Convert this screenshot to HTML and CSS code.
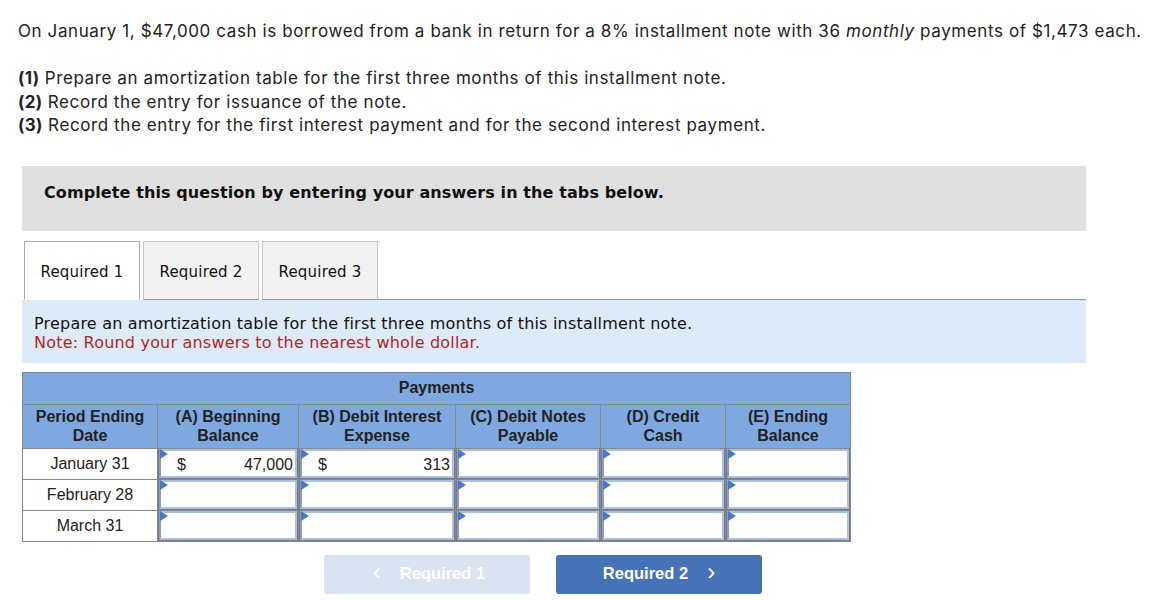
FILE: index.html
```html
<!DOCTYPE html>
<html>
<head>
<meta charset="utf-8">
<link rel="stylesheet" href="styles.css">
</head>
<body>
<div class="page">
  <p class="intro">On January 1, $47,000 cash is borrowed from a bank in return for a 8% installment note with 36 <em>monthly</em> payments of $1,473 each.</p>
  <div class="reqs">
    <div><b>(1)</b> Prepare an amortization table for the first three months of this installment note.</div>
    <div><b>(2)</b> Record the entry for issuance of the note.</div>
    <div><b>(3)</b> Record the entry for the first interest payment and for the second interest payment.</div>
  </div>
  <div class="panel">
    <div class="banner">Complete this question by entering your answers in the tabs below.</div>
    <div class="tabs">
      <div class="tab active">Required 1</div>
      <div class="tab">Required 2</div>
      <div class="tab">Required 3</div>
      <div class="tab-fill"></div>
    </div>
    <div class="instr">
      <div>Prepare an amortization table for the first three months of this installment note.</div>
      <div class="note">Note: Round your answers to the nearest whole dollar.</div>
    </div>
    <table class="amort">
      <colgroup>
        <col class="c0"><col class="c1"><col class="c2"><col class="c3"><col class="c4"><col class="c5">
      </colgroup>
      <thead>
        <tr class="h1"><th colspan="6">Payments</th></tr>
        <tr class="h2">
          <th>Period Ending<br>Date</th>
          <th>(A) Beginning<br>Balance</th>
          <th>(B) Debit Interest<br>Expense</th>
          <th>(C) Debit Notes<br>Payable</th>
          <th>(D) Credit<br>Cash</th>
          <th>(E) Ending<br>Balance</th>
        </tr>
      </thead>
      <tbody>
        <tr>
          <td class="date">January 31</td>
          <td class="in"><div class="box"><span class="cur">$</span><span class="val">47,000</span></div></td>
          <td class="in"><div class="box"><span class="cur">$</span><span class="val">313</span></div></td>
          <td class="in"><div class="box"></div></td>
          <td class="in"><div class="box"></div></td>
          <td class="in"><div class="box"></div></td>
        </tr>
        <tr>
          <td class="date">February 28</td>
          <td class="in"><div class="box"></div></td>
          <td class="in"><div class="box"></div></td>
          <td class="in"><div class="box"></div></td>
          <td class="in"><div class="box"></div></td>
          <td class="in"><div class="box"></div></td>
        </tr>
        <tr>
          <td class="date">March 31</td>
          <td class="in"><div class="box"></div></td>
          <td class="in"><div class="box"></div></td>
          <td class="in"><div class="box"></div></td>
          <td class="in"><div class="box"></div></td>
          <td class="in"><div class="box"></div></td>
        </tr>
      </tbody>
    </table>
    <div class="nav">
      <div class="btn prev"><span class="chev">&lsaquo;</span>Required 1</div>
      <div class="btn next">Required 2<span class="chev">&rsaquo;</span></div>
    </div>
  </div>
</div>
</body>
</html>
```

FILE: styles.css
```css
* { box-sizing: border-box; }
body { margin: 0; background: #fff; color: #222; }
.page { padding: 19px 0 0 18px; }
.intro {
  margin: 0;
  font-family: Inter, "Open Sans", sans-serif;
  font-size: 17px;
  line-height: 24px;
  letter-spacing: 0.6px;
}
.intro em { font-style: italic; }
.reqs {
  margin-top: 24px;
  font-family: Inter, "Open Sans", sans-serif;
  font-size: 17px;
  line-height: 23.5px;
  letter-spacing: 0.6px;
}
.reqs b { font-weight: 700; letter-spacing: 0.3px; }
.panel { margin-left: 4px; width: 1064px; margin-top: 28px; }
.banner {
  background: #e0e0e0;
  height: 65px;
  padding: 17px 0 0 22px;
  font-family: "DejaVu Sans", Verdana, sans-serif;
  font-weight: bold;
  font-size: 16px;
  letter-spacing: 0.1px;
  color: #111;
}
.tabs { display: flex; margin-top: 10px; height: 59px; align-items: stretch; }
.tab {
  width: 116px;
  margin-right: 3px;
  border: 1px solid #c8c8c8;
  border-bottom: 1px solid #999;
  background: #f2f2f2;
  font-family: "DejaVu Sans", Verdana, sans-serif;
  font-size: 15px;
  letter-spacing: 0.2px;
  color: #111;
  display: flex; align-items: center; justify-content: center;
  padding-top: 4px;
}
.tab.active {
  margin-left: 2px;
  background: #fff;
  border-color: #aaa;
  border-bottom: 1px solid #fff;
}
.tab-fill { flex: 1; border-bottom: 1px solid #999; margin-left: -3px; }
.instr {
  background: #ddeaf8;
  height: 63px;
  padding: 14px 0 0 12px;
  font-family: "DejaVu Sans", Verdana, sans-serif;
  font-size: 16px;
  letter-spacing: 0.2px;
  line-height: 19px;
  color: #111;
}
.instr .note { color: #b3261e; }
.amort {
  margin-top: 9px;
  border-collapse: collapse;
  font-family: "Liberation Sans", Arial, sans-serif;
  font-size: 16px;
  color: #222;
  table-layout: fixed;
  width: 828px;
}
.c0 { width: 135px; } .c1 { width: 141px; } .c2 { width: 157px; }
.c3 { width: 145px; } .c4 { width: 125px; } .c5 { width: 125px; }
.amort th {
  background: #80a8e0;
  border: 1px solid #888;
  font-weight: bold;
  font-size: 16px;
  line-height: 19px;
  color: #222;
  padding: 0;
}
.amort .h1 th { height: 32px; padding-bottom: 1px; }
.amort .h2 th { height: 44px; }
.amort td { border: 1px solid #888; padding: 0; height: 31px; }
.amort td.date { text-align: center; background: #fff; }
.amort td.in { padding: 0 1px; background: #7a7a7a; }
.box {
  position: relative;
  height: 29px;
  background: #fff;
  border: 2px solid #a9c1e6;
  border-left-color: #7e9fd6;
  display: flex; align-items: center; justify-content: space-between;
  padding: 2px 2px 0 16px;
  font-size: 16px;
}
.box::before {
  content: "";
  position: absolute; left: -1px; top: -2px;
  border-top: 5px solid transparent;
  border-bottom: 5px solid transparent;
  border-left: 8px solid #4a78c4;
}
.nav { display: flex; gap: 26px; margin: 13px 0 0 302px; }
.btn {
  width: 206px; height: 39px;
  border-radius: 3px;
  display: flex; align-items: center; justify-content: center;
  font-family: "Liberation Sans", Arial, sans-serif;
  font-weight: bold; font-size: 16.5px;
  color: #fff;
  padding-bottom: 1px;
}
.btn.prev { background: #dae3f2; padding-left: 4px; }
.btn.next { background: #4672b8; }
.chev { font-size: 24px; font-weight: normal; line-height: 1; margin: -3px 0 0; }
.prev .chev { margin-right: 19px; }
.next .chev { margin-left: 19px; }
```
